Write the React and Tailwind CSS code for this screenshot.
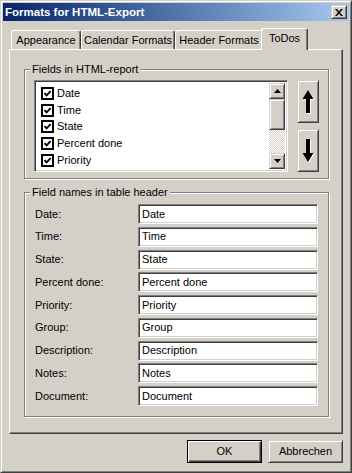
import React from 'react';

const raised =
  'border border-t-[#D4D0C8] border-l-[#D4D0C8] border-r-[#404040] border-b-[#404040] shadow-[inset_1px_1px_#fff,inset_-1px_-1px_#808080]';
const sunken =
  'border border-t-[#808080] border-l-[#808080] border-r-white border-b-white shadow-[inset_1px_1px_#404040,inset_-1px_-1px_#D4D0C8]';
const group =
  'border border-[#808080] shadow-[inset_1px_1px_#fff,1px_1px_#fff] min-w-0';

const LIST_ITEMS = ['Date', 'Time', 'State', 'Percent done', 'Priority'];
const FIELDS = ['Date', 'Time', 'State', 'Percent done', 'Priority', 'Group', 'Description', 'Notes', 'Document'];

const Tab = ({ label, width, active }) => (
  <div
    className={`${width} flex items-center justify-center rounded-t-[3px] border-l border-t border-white border-r border-r-[#404040] shadow-[inset_-1px_0_#808080] bg-[#D4D0C8] ${
      active ? 'h-[22px] -mb-[1px] -ml-[2px] -mr-[2px] relative z-10 pb-[3px]' : 'h-[19px] pt-[1px]'
    }`}
  >
    {label}
  </div>
);

const CheckBox = () => (
  <div className="w-[13px] h-[13px] border-2 border-black bg-white flex items-center justify-center shrink-0">
    <svg width="9" height="9" viewBox="0 0 9 9">
      <path d="M1.5 4.2 L3.6 6.4 L7.6 2.2" fill="none" stroke="#000" strokeWidth="1.9" />
    </svg>
  </div>
);

const BigArrow = ({ down }) => (
  <svg width="14" height="25" viewBox="0 0 14 25" className={down ? 'rotate-180' : ''}>
    {!down && <path d="M7 1 L12.5 10 L9 10 L9 24 L5 24 L5 10 L1.5 10 Z" fill="#fff" transform="translate(1 1)" />}
    {down && <path d="M7 1 L12.5 10 L9 10 L9 24 L5 24 L5 10 L1.5 10 Z" fill="#fff" transform="translate(-1 -1)" />}
    <path d="M7 1 L12.5 10 L9 10 L9 24 L5 24 L5 10 L1.5 10 Z" fill="#000" />
  </svg>
);

export default function App() {
  return (
    <div className="w-[352px] h-[473px] bg-[#D4D0C8] border border-t-[#D4D0C8] border-l-[#D4D0C8] border-r-[#404040] border-b-[#404040] shadow-[inset_1px_1px_#fff,inset_-1px_-1px_#808080] p-[2px] flex flex-col font-['Liberation_Sans',Arial,sans-serif] text-[11px] leading-[13px] text-black select-none">
      {/* Title bar */}
      <div className="h-[18px] shrink-0 flex items-center justify-between bg-linear-to-r from-[#0A246A] to-[#A6CAF0] pl-[2px] pr-[2px]">
        <span className="text-white font-bold text-[11.5px]">Formats for HTML-Export</span>
        <div className={`w-[16px] h-[14px] bg-[#D4D0C8] ${raised} flex items-center justify-center`}>
          <svg width="8" height="7" viewBox="0 0 8 7">
            <path d="M0 0h2l2 2.4L6 0h2L5 3.5 8 7H6L4 4.6 2 7H0l3-3.5z" fill="#000" />
          </svg>
        </div>
      </div>

      <div className="flex-1 flex flex-col px-[6px]">
        {/* Tabs */}
        <div className="mt-[7px] h-[21px] flex items-end pl-[2px]">
          <Tab label="Appearance" width="w-[70px]" />
          <Tab label="Calendar Formats" width="w-[94px]" />
          <Tab label="Header Formats" width="w-[88px]" />
          <Tab label="ToDos" width="w-[47px]" active />
        </div>

        {/* Panel */}
        <div className="h-[385px] border border-t-white border-l-white border-r-[#404040] border-b-[#404040] shadow-[inset_-1px_-1px_#808080] pl-[14px] pr-[13px] flex flex-col">
          {/* Fields in HTML-report */}
          <fieldset className={`${group} mt-[13px]`}>
            <legend className="ml-[5px] px-[2px] bg-[#D4D0C8] leading-[13px]">Fields in HTML-report</legend>
            <div className="mt-[4px] pl-[9px] pr-[9px] pb-[6px] flex gap-[9px]">
              <div className={`flex-1 h-[92px] bg-white ${sunken} p-[2px] flex`}>
                <div className="flex-1 pt-[2px] pl-[4px] flex flex-col">
                  {LIST_ITEMS.map((item) => (
                    <div key={item} className="h-[17px] flex items-center gap-[3px]">
                      <CheckBox />
                      <span>{item}</span>
                    </div>
                  ))}
                </div>
                <div className="w-[16px] flex flex-col">
                  <div className={`h-[16px] bg-[#D4D0C8] ${raised} flex items-center justify-center`}>
                    <svg width="7" height="4" viewBox="0 0 7 4">
                      <path d="M3.5 0 L7 4 L0 4 Z" fill="#000" />
                    </svg>
                  </div>
                  <div className={`h-[31px] bg-[#D4D0C8] ${raised}`} />
                  <div className="flex-1 bg-[repeating-conic-gradient(#fff_0_25%,#D4D0C8_0_50%)] bg-[length:2px_2px]" />
                  <div className={`h-[16px] bg-[#D4D0C8] ${raised} flex items-center justify-center`}>
                    <svg width="7" height="4" viewBox="0 0 7 4">
                      <path d="M0 0 L7 0 L3.5 4 Z" fill="#000" />
                    </svg>
                  </div>
                </div>
              </div>
              <div className="w-[22px] h-[92px] flex flex-col justify-between">
                <div className={`h-[43px] bg-[#D4D0C8] ${raised} flex items-center justify-center`}>
                  <BigArrow />
                </div>
                <div className={`h-[43px] bg-[#D4D0C8] ${raised} flex items-center justify-center`}>
                  <BigArrow down />
                </div>
              </div>
            </div>
          </fieldset>

          {/* Field names in table header */}
          <fieldset className={`${group} mt-[7px]`}>
            <legend className="ml-[5px] px-[2px] bg-[#D4D0C8] leading-[13px]">Field names in table header</legend>
            <div className="mt-[5px] pl-[10px] pr-[10px] pb-[10px] flex flex-col gap-[2.75px]">
              {FIELDS.map((f) => (
                <div key={f} className="flex items-center">
                  <span className="w-[103px]">{f}:</span>
                  <div className={`w-[180px] h-[20px] bg-white ${sunken} pl-[3px] flex items-center`}>
                    {f}
                  </div>
                </div>
              ))}
            </div>
          </fieldset>
        </div>

        {/* Buttons */}
        <div className="mt-[6px] flex justify-end gap-[6px]">
          <div className="w-[75px] h-[23px] bg-[#D4D0C8] border border-black shadow-[inset_1px_1px_#fff,inset_-1px_-1px_#404040,inset_-2px_-2px_#808080] flex items-center justify-center">
            OK
          </div>
          <div className={`w-[75px] h-[23px] bg-[#D4D0C8] ${raised} flex items-center justify-center`}>
            Abbrechen
          </div>
        </div>
      </div>
    </div>
  );
}
